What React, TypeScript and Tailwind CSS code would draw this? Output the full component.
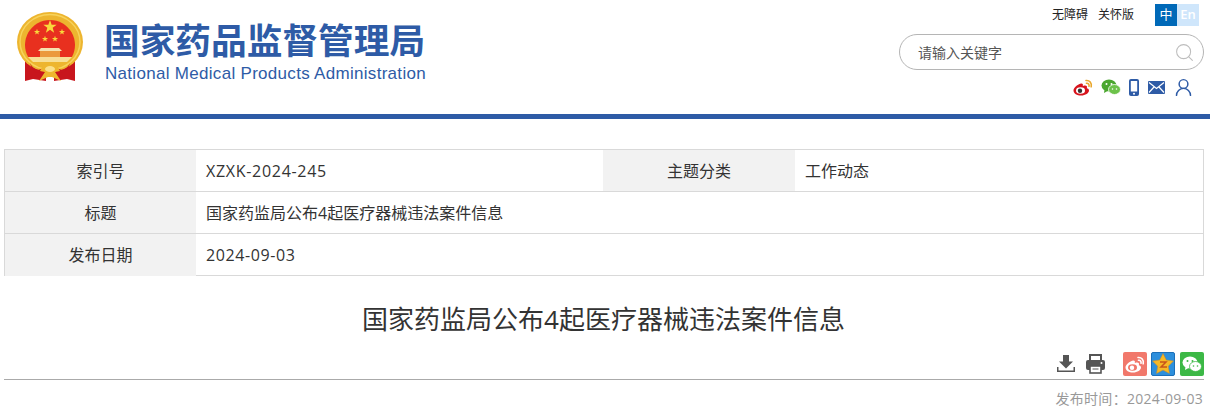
import { Search, UserRound } from "lucide-react";

const cjk = "font-['Open_Sans','Noto_Sans_CJK_SC',sans-serif]";

function star(cx: number, cy: number, r: number, inner = 0.4) {
  const pts: string[] = [];
  for (let i = 0; i < 10; i++) {
    const rad = i % 2 === 0 ? r : r * inner;
    const a = -Math.PI / 2 + (i * Math.PI) / 5;
    pts.push(`${cx + rad * Math.cos(a)},${cy + rad * Math.sin(a)}`);
  }
  return pts.join(" ");
}

function Emblem() {
  return (
    <svg width="68" height="72" viewBox="0 0 68 72" className="shrink-0">
      <path d="M9 48 L9 70 L17 68 L30 70 L30 58 Z" fill="#c8161d" />
      <path d="M59 48 L59 70 L51 68 L38 70 L38 58 Z" fill="#c8161d" />
      <ellipse cx="34" cy="31" rx="33" ry="30" fill="#edb52f" />
      <ellipse cx="34" cy="31" rx="30" ry="27.500" fill="none" stroke="#f7d35c" strokeWidth="1.500" />
      <path d="M12.100 46 A25 25 0 1 1 55.900 46 Z" fill="#e8301f" />
      <polygon points={star(34, 16, 7)} fill="#f9d83c" />
      <polygon points={star(21, 21, 3.200)} fill="#f9d83c" />
      <polygon points={star(46, 21, 3.200)} fill="#f9d83c" />
      <polygon points={star(29, 28, 3.200)} fill="#f9d83c" />
      <polygon points={star(39, 28, 3.200)} fill="#f9d83c" />
      <path d="M25 37 L43 37 L46 40 L22 40 Z" fill="#f6e3ae" />
      <path d="M24 40 h20 v6 h-20 z" fill="#eb9a3c" />
      <path d="M12 46 L56 46 L51 51 L17 51 Z" fill="#f8df95" />
      <path d="M14 52 C18 60 24 60 28 56 L28 61 C21 64 16 60 14 52Z" fill="#c8161d" />
      <path d="M54 52 C50 60 44 60 40 56 L40 61 C47 64 52 60 54 52Z" fill="#c8161d" />
      <path d="M27 55 C30 52 38 52 41 55 L44 60 L39 61 L45 70 L36 66 L32 66 L23 70 L29 61 L24 60 Z" fill="#eeb62e" />
      <ellipse cx="34" cy="58" rx="5" ry="3" fill="#fbe08a" />
    </svg>
  );
}

function Weibo({ body, eye, wave }: { body: string; eye: string; wave: string }) {
  return (
    <svg width="20" height="17" viewBox="0 0 20 17">
      <path d="M8 4.500C4 5.500 0.500 9 0.500 11.500 0.500 14.500 4 16.500 8 16.500 12.500 16.500 16 14 16 11.500 16 10 14.500 9.500 13.800 9.300 14.500 7.500 13.800 6.500 12 6.500 11 6.500 9.800 7 9.800 7 10.300 5 9.500 4.300 8 4.500Z" fill={body} />
      <ellipse cx="7.500" cy="11.500" rx="4.500" ry="3.300" fill={body === "#fff" ? eye : "#fff"} />
      <circle cx="7" cy="11.700" r="2.200" fill={body === "#fff" ? "#fff" : eye} />
      <path d="M13 1.500C16.500 1 19 4 18.200 7.800M13.500 4.300C15.200 4 16.500 5.500 16 7.300" fill="none" stroke={wave} strokeWidth="1.600" strokeLinecap="round" />
    </svg>
  );
}

function Wechat({ a, b, hole, size = 20 }: { a: string; b: string; hole: string; size?: number }) {
  return (
    <svg width={size} height={size * 0.8} viewBox="0 0 20 16">
      <ellipse cx="8" cy="6.500" rx="7.500" ry="6" fill={a} />
      <path d="M3.500 10.500L3 14L6.500 12Z" fill={a} />
      <ellipse cx="13.500" cy="10.500" rx="6" ry="5" fill={b} stroke={hole} strokeWidth="0.800" />
      <circle cx="5.500" cy="5" r="1" fill={hole} />
      <circle cx="10.500" cy="5" r="1" fill={hole} />
      <circle cx="11.500" cy="10" r="0.800" fill={hole} />
      <circle cx="15.500" cy="10" r="0.800" fill={hole} />
    </svg>
  );
}

function Phone() {
  return (
    <svg width="10" height="17" viewBox="0 0 10 17">
      <rect x="0" y="0" width="10" height="17" rx="2" fill="#2e5ba6" />
      <rect x="1.800" y="2" width="6.400" height="10.500" fill="#fff" />
      <circle cx="5" cy="14.700" r="1" fill="#fff" />
    </svg>
  );
}

function Envelope() {
  return (
    <svg width="17" height="13" viewBox="0 0 17 13">
      <rect width="17" height="13" rx="1" fill="#2e5ba6" />
      <path d="M1 1.500L8.500 7.500L16 1.500M1 11.500L6 6M16 11.500L11 6" fill="none" stroke="#fff" strokeWidth="1.200" />
    </svg>
  );
}

function DownloadIcon() {
  return (
    <svg width="18" height="18" viewBox="0 0 18 18">
      <path d="M6 0h6v6.500h4L9 13.500 2 6.500h4Z" fill="#555" />
      <path d="M0 12v5h18v-5h-1.500v3.500h-15V12Z" fill="#555" />
    </svg>
  );
}

function PrinterIcon() {
  return (
    <svg width="19" height="20" viewBox="0 0 19 20">
      <path d="M4 6V1h11v5" fill="none" stroke="#555" strokeWidth="2" />
      <rect x="0" y="6" width="19" height="10" rx="2" fill="#555" />
      <rect x="4" y="12" width="11" height="7" fill="#fff" stroke="#555" strokeWidth="1.600" />
      <path d="M6.500 15h6" stroke="#555" strokeWidth="1" />
      <circle cx="15.500" cy="9" r="1" fill="#fff" />
    </svg>
  );
}

function Row({ label, children, last }: { label: string; children: React.ReactNode; last?: boolean }) {
  return (
    <div className={`flex h-[42px] ${last ? "" : "border-b border-[#d9d9d9]"}`}>
      <div className="flex w-[191px] shrink-0 items-center justify-center bg-[#f2f2f2]">{label}</div>
      {children}
    </div>
  );
}

export default function App() {
  return (
    <div className={`h-[415px] w-[1210px] overflow-hidden bg-white text-[#333] ${cjk}`}>
      <header className="flex h-[119px] justify-between border-b-[5px] border-[#2e5ba6]">
        <div className="flex items-start pl-[16px] pt-[11px]">
          <Emblem />
          <div className="ml-[20px] pt-[7px] text-[#2e5ba6]">
            <div className="font-['Noto_Sans_CJK_SC',sans-serif] text-[35.700px] leading-[42px] font-bold whitespace-nowrap">国家药品监督管理局</div>
            <div className="ml-[1px] mt-[4px] font-['Liberation_Sans',sans-serif] text-[17px] leading-[20px] tracking-[0.300px] whitespace-nowrap">National Medical Products Administration</div>
          </div>
        </div>
        <div className="flex w-[312px] flex-col items-end pr-[6px] pt-[4px]">
          <div className="mr-[5px] flex h-[22px] items-center text-[12px] text-[#222]">
            <span>无障碍</span>
            <span className="ml-[10px]">关怀版</span>
            <span className="ml-[21px] flex h-[22px] w-[22px] items-center justify-center bg-[#0069b8] text-[13px] text-white">中</span>
            <span className="flex h-[22px] w-[22px] items-center justify-center bg-[#cfe6fb] text-[13px] font-semibold text-white">En</span>
          </div>
          <div className="mt-[8px] flex h-[36px] w-[305px] items-center justify-between rounded-[18px] border border-[#b5b5b5] pl-[18px] pr-[8px] text-[14px] text-[#555]">
            <span>请输入关键字</span>
            <Search size={21} strokeWidth={1.200} className="text-[#bdbdbd]" />
          </div>
          <div className="mt-[7px] flex h-[20px] items-center pr-[10px]">
            <Weibo body="#d7141d" eye="#333" wave="#e9a72d" />
            <span className="ml-[8px]"><Wechat a="#4aa62f" b="#6cc24a" hole="#fff" /></span>
            <span className="ml-[8px] flex"><Phone /></span>
            <span className="ml-[9px] flex"><Envelope /></span>
            <UserRound size={21} strokeWidth={1.700} className="ml-[8px] text-[#2e5ba6]" />
          </div>
        </div>
      </header>

      <div className="ml-[4px] mr-[6px] mt-[30px] h-[127px] border border-[#d9d9d9] text-[16px] text-[#333]">
        <Row label="索引号">
          <div className="flex w-[407px] items-center pl-[10px] tracking-[0.700px]">XZXK-2024-245</div>
          <div className="flex w-[192px] items-center justify-center bg-[#f2f2f2]">主题分类</div>
          <div className="flex flex-1 items-center pl-[10px]">工作动态</div>
        </Row>
        <Row label="标题">
          <div className="flex flex-1 items-center pl-[10px]">国家药监局公布4起医疗器械违法案件信息</div>
        </Row>
        <Row label="发布日期" last>
          <div className="flex flex-1 items-center pl-[10px] tracking-[0.600px]">2024-09-03</div>
        </Row>
      </div>

      <h1 className="mt-[25px] pr-[3px] text-center text-[26px] leading-[36px] text-[#333]">国家药监局公布4起医疗器械违法案件信息</h1>

      <div className="ml-[4px] mr-[6px] mt-[15px] flex h-[28px] items-center justify-end border-b border-[#aaa] pb-[3px]">
        <DownloadIcon />
        <span className="ml-[11px] flex"><PrinterIcon /></span>
        <span className="ml-[18px] flex h-[24px] w-[24px] items-center justify-center rounded-[2px] bg-[#f1786b]">
          <Weibo body="#fff" eye="#f1786b" wave="#fff" />
        </span>
        <span className="ml-[4px] flex h-[24px] w-[24px] items-center justify-center rounded-[2px] border border-[#1c6fb8] bg-[#2d8fdc]">
          <svg width="22" height="22" viewBox="0 0 22 22">
            <polygon points={star(11, 11.500, 11, 0.5)} fill="#f6b926" stroke="#d88c1a" strokeWidth="0.500" />
            <path d="M8 9h6l-5 5h6" fill="none" stroke="#c9541a" strokeWidth="1.500" />
          </svg>
        </span>
        <span className="ml-[5px] flex h-[24px] w-[24px] items-center justify-center rounded-[2px] bg-[#3cb846]">
          <Wechat a="#fff" b="#fff" hole="#3cb846" size={20} />
        </span>
      </div>

      <div className="mx-[6px] mt-[9px] flex justify-end pr-[1px] text-[14px] leading-[20px] tracking-[0.300px] text-[#999]">发布时间：2024-09-03</div>
    </div>
  );
}
